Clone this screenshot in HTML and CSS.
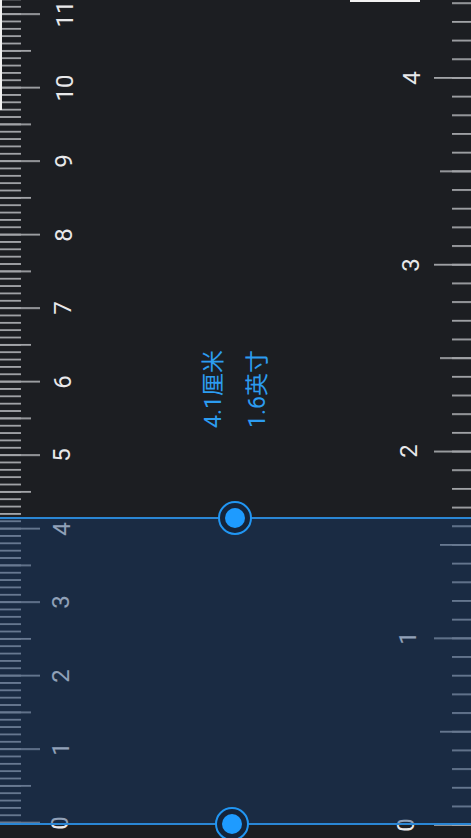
FILE: index.html
```html
<!DOCTYPE html>
<html lang="zh-CN">
<head>
<meta charset="utf-8">
<title>尺子</title>
<link rel="stylesheet" href="styles.css">
</head>
<body>
<div class="ruler">
  <svg class="scale scale-cm" width="48" height="838" viewBox="0 0 48 838" aria-hidden="true">
    <defs>
      <pattern id="cm-mm" width="48" height="7.35" y="5.85" patternUnits="userSpaceOnUse"><rect width="21" height="1.8" fill="#a2a4a8"/></pattern>
      <pattern id="cm-half" width="48" height="73.5" y="49.95" patternUnits="userSpaceOnUse"><rect width="31" height="1.8" fill="#a2a4a8"/></pattern>
      <pattern id="cm-cm" width="48" height="73.5" y="13.2" patternUnits="userSpaceOnUse"><rect width="40" height="1.8" fill="#a2a4a8"/></pattern>
    </defs>
    <rect width="48" height="824" fill="url(#cm-mm)"/>
    <rect width="48" height="824" fill="url(#cm-half)"/>
    <rect width="48" height="824" fill="url(#cm-cm)"/>
  </svg>

  <svg class="scale scale-in" width="40" height="838" viewBox="0 0 40 838" aria-hidden="true">
    <defs>
      <pattern id="in-tenth" width="40" height="18.68" y="2.28" patternUnits="userSpaceOnUse"><rect x="21" width="19" height="1.8" fill="#a2a4a8"/></pattern>
      <pattern id="in-half" width="40" height="186.8" y="170.4" patternUnits="userSpaceOnUse"><rect x="9" width="31" height="1.8" fill="#a2a4a8"/></pattern>
      <pattern id="in-inch" width="40" height="186.8" y="77" patternUnits="userSpaceOnUse"><rect x="3" width="37" height="1.8" fill="#a2a4a8"/></pattern>
    </defs>
    <rect width="40" height="826" fill="url(#in-tenth)"/>
    <rect width="40" height="826" fill="url(#in-half)"/>
    <rect width="40" height="826" fill="url(#in-inch)"/>
  </svg>

  <div class="num num-cm" style="left:60px;top:822.5px">0</div>
  <div class="num num-cm" style="left:60.5px;top:749px">1</div>
  <div class="num num-cm" style="left:61px;top:675.5px">2</div>
  <div class="num num-cm" style="left:61.4px;top:602px">3</div>
  <div class="num num-cm" style="left:61.8px;top:528.5px">4</div>
  <div class="num num-cm" style="left:62.3px;top:455px">5</div>
  <div class="num num-cm" style="left:62.7px;top:381.5px">6</div>
  <div class="num num-cm" style="left:63.2px;top:308px">7</div>
  <div class="num num-cm" style="left:63.6px;top:234.5px">8</div>
  <div class="num num-cm" style="left:64px;top:161px">9</div>
  <div class="num num-cm" style="left:64.5px;top:87.5px">10</div>
  <div class="num num-cm" style="left:65px;top:14px">11</div>

  <div class="num num-in" style="left:406px;top:825px">0</div>
  <div class="num num-in" style="left:407.5px;top:638.2px">1</div>
  <div class="num num-in" style="left:409px;top:451.4px">2</div>
  <div class="num num-in" style="left:410.5px;top:264.6px">3</div>
  <div class="num num-in" style="left:412px;top:77.8px">4</div>

  <div class="selection"></div>

  <div class="readout">
    <div class="readout-line">4.1厘米</div>
    <div class="readout-line">1.6英寸</div>
  </div>

  <div class="handle handle-top"></div>
  <div class="handle handle-bottom"></div>

  <div class="edge edge-left"></div>
  <div class="edge edge-top"></div>
</div>
</body>
</html>
```

FILE: styles.css
```css
html, body {
  margin: 0;
  padding: 0;
  background: #1c1e22;
}

.ruler {
  position: relative;
  width: 471px;
  height: 838px;
  overflow: hidden;
  background: #1c1e22;
  font-family: Roboto, "Noto Sans CJK SC", sans-serif;
}

.scale {
  position: absolute;
  top: 0;
  display: block;
}

.scale-cm {
  left: 0;
}

.scale-in {
  right: 0;
}

.num {
  position: absolute;
  transform: translate(-50%, -50%) rotate(-90deg);
  font-size: 24px;
  line-height: 24px;
  color: #e8e8ea;
  white-space: nowrap;
}

.selection {
  position: absolute;
  left: 0;
  right: 0;
  top: 517px;
  height: 308px;
  box-sizing: border-box;
  background: rgba(25, 62, 115, 0.42);
  border-top: 2px solid #2a86d4;
  border-bottom: 2px solid #2a86d4;
}

.readout {
  position: absolute;
  left: 236px;
  top: 389px;
  transform: translate(-50%, -50%) rotate(-90deg);
  display: flex;
  flex-direction: column;
  align-items: flex-start;
  color: #2c9cf0;
  font-size: 23px;
  line-height: 44px;
  white-space: nowrap;
}

.handle {
  position: absolute;
  width: 34px;
  height: 34px;
  box-sizing: border-box;
  border-radius: 50%;
  border: 2.5px solid #2196f3;
  background: #15243a;
  transform: translate(-50%, -50%);
  display: flex;
  align-items: center;
  justify-content: center;
}

.handle::after {
  content: "";
  width: 20px;
  height: 20px;
  border-radius: 50%;
  background: #1e9bff;
}

.handle-top {
  left: 235px;
  top: 518px;
}

.handle-bottom {
  left: 232px;
  top: 824px;
}

.edge {
  position: absolute;
  background: #f2f2f2;
}

.edge-left {
  left: 0;
  top: 0;
  width: 2px;
  height: 110px;
}

.edge-top {
  left: 350px;
  top: 0;
  width: 70px;
  height: 2px;
}
```
